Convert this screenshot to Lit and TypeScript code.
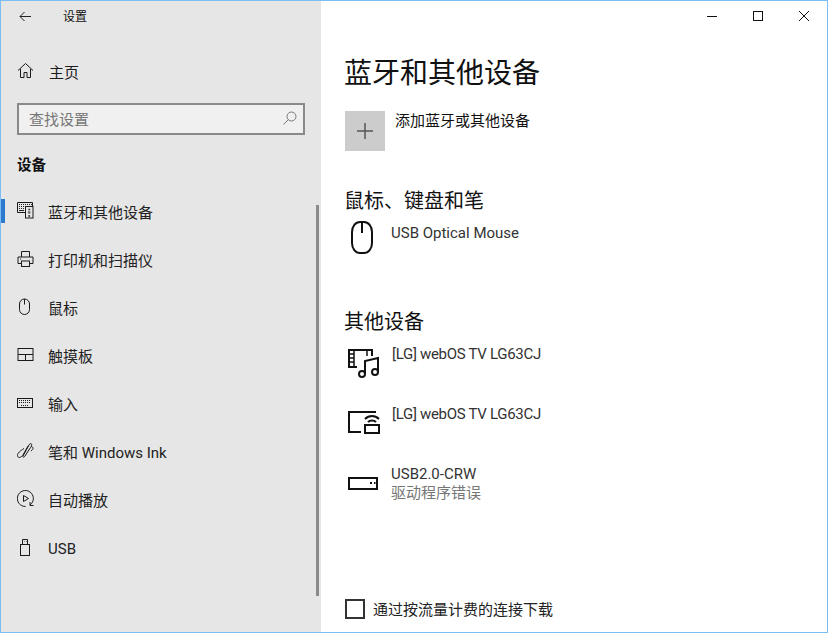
import { LitElement, html, css, svg } from "lit";
import { customElement } from "lit/decorators.js";

const s16 = (body: unknown) => html`<svg class="ni" width="18" height="18" viewBox="0 0 18 18" fill="none" stroke="#1a1a1a" stroke-width="1">${body}</svg>`;

const navIcons = [
  svg`<path d="M.5 .5H15.5V9.5H8.5V10.5H.5Z" fill="none"/><path d="M2 2.5h1M4 2.5h1M6 2.5h1M8 2.5h1M10 2.5h1M12 2.5h1M14 2.5h1M2 4.5h1M4 4.5h1M6 4.5h1M2 6.5h1M4 6.5h1M6 6.5h1M2 8.5h5" stroke="#222"/><rect x="8.5" y="4.5" width="7.5" height="11.5" fill="#e6e6e6"/><circle cx="12.2" cy="7.5" r="1.1" fill="#555" stroke="none"/><circle cx="12.2" cy="10.5" r="1.4" fill="#777" stroke="none"/><circle cx="12.2" cy="14" r="1" fill="#333" stroke="none"/>`,
  svg`<path d="M4.5 7V1.5H12.5V7"/><path d="M4.5 13.5H1V7H16V13.5H12.5"/><rect x="4.5" y="11" width="8" height="5.5"/><path d="M3 9h1"/>`,
  svg`<rect x="2.5" y="1" width="10" height="15.5" rx="5" ry="5"/><path d="M7.5 1V6.5"/>`,
  svg`<rect x="1" y="2.5" width="15" height="12"/><path d="M1 8.5H16M8.5 8.5V14.5"/>`,
  svg`<rect x=".5" y="4.5" width="15" height="9"/><path d="M2 6.5h12M2 8.5h12M4 11.5h8" stroke-dasharray="1 1"/>`,
  svg`<path d="M6 14L12 3C12.8 1.5 14 1 14.5 2S14.5 4 13.5 5.5L8 14C7 15.5 6 15.5 5.8 14.5S6 13 6.5 12L11 4"/><path d="M7 6.5C3 9 .5 11 .5 13.5S3 16 5 14"/><path d="M14 4.5C16.5 5 17 7 14 9"/>`,
  svg`<path d="M13 15A8 8 0 1 0 8.5 16.5" /><path d="M13 12V15.5H16.5"/><path d="M6.5 5.5L11.5 8.5L6.5 11.5Z"/>`,
  svg`<rect x="3.5" y="6.5" width="9" height="11"/><path d="M5.5 6.5V1.5H10.5V6.5"/><path d="M7 3.5h.5M9 3.5h.5"/>`,
];

const navItems = ["蓝牙和其他设备", "打印机和扫描仪", "鼠标", "触摸板", "输入", "笔和 Windows Ink", "自动播放", "USB"];

@customElement("app-root")
export class AppRoot extends LitElement {
  static styles = css`
    :host {
      display: block;
      width: 828px;
      height: 633px;
      box-sizing: border-box;
      border: 1px solid #7dbcf6;
      background: #fff;
      font-family: Roboto, "Noto Sans CJK SC", sans-serif;
      font-size: 15px;
      color: #1a1a1a;
      overflow: hidden;
    }
    svg { display: block; flex: none; }
    .win { display: flex; height: 100%; }

    .side {
      position: relative;
      flex: none;
      width: 320px;
      background: #e6e6e6;
      display: flex;
      flex-direction: column;
    }
    .head { height: 30px; display: flex; align-items: center; padding-left: 16px; }
    .head .title { margin-left: 30px; font-size: 12px; line-height: 30px; padding-top: 2px; color: #111; }
    .home { margin-top: 22px; height: 36px; display: flex; align-items: center; padding-left: 16px; }
    .home span { margin-left: 14px; }
    .search {
      margin: 14px 0 0 16px;
      width: 288px;
      height: 32px;
      box-sizing: border-box;
      border: 2px solid #8a8a8a;
      background: #f0f0f0;
      display: flex;
      align-items: center;
      justify-content: space-between;
      padding: 0 5px 2px 10px;
      color: #767676;
    }
    .sec { margin: 17px 0 0 16px; height: 28px; line-height: 28px; font-weight: 700; font-size: 14.5px; color: #111; }
    .nav { margin-top: 7px; display: flex; flex-direction: column; }
    .item { height: 48px; display: flex; align-items: center; padding-left: 16px; position: relative; color: #222; }
    .item .ni { margin-right: 13px; }
    .item.last span { padding-top: 3px; }
    .item.on::before {
      content: "";
      position: absolute;
      left: 0; top: 12px;
      width: 4px; height: 24px;
      background: #2b7ad0;
    }
    .thumb { position: absolute; left: 315px; top: 204px; width: 3px; height: 391px; background: #8a8a8a; }

    .main { flex: 1; display: flex; flex-direction: column; padding-left: 24px; position: relative; }
    .ctl { height: 30px; display: flex; justify-content: flex-end; align-items: center; }
    .ctl div { width: 46px; display: flex; justify-content: center; }
    h1 { margin: 23px 0 0 -1px; font-size: 28px; font-weight: 400; line-height: 40px; color: #111; }
    .add { margin-top: 17px; display: flex; color: #111; height: 40px; }
    .tile { width: 40px; height: 40px; background: #ccc; display: flex; align-items: center; justify-content: center; flex: none; }
    .add span { margin-left: 10px; line-height: 20px; }
    h2 { margin: 36px 0 0 -1px; font-size: 20px; font-weight: 400; line-height: 28px; color: #111; }
    h2.two { margin-top: 53px; }
    .dev { display: flex; height: 60px; }
    .dev .ic { width: 46px; flex: none; }
    .dev .tx { line-height: 20px; padding-top: 8px; color: #333; }
    .dev .lg { margin-left: 1px; letter-spacing: -0.3px; }
    .dev .er { color: #767676; margin-top: -1px; }
    .mouse { height: 40px; }
    .mouse .ic svg { margin: 6px 0 0 6px; }
    .film svg { margin: 12px 0 0 1px; }
    .cast svg { margin: 14px 0 0 1px; }
    .drive svg { margin: 17px 0 0 1px; }
    .foot { margin-top: auto; padding-bottom: 13px; display: flex; align-items: center; color: #222; }
    .box { width: 20px; height: 20px; box-sizing: border-box; border: 2px solid #333; margin-right: 8px; }
  `;

  render() {
    return html`<div class="win">
      <div class="side">
        <div class="head">
          <svg width="16" height="16" viewBox="0 0 16 16" fill="none" stroke="#222"><path d="M14 8.5H3M7.5 4L3 8.5L7.5 13"/></svg>
          <span class="title">设置</span>
        </div>
        <div class="home">
          ${s16(svg`<path d="M1 8.5L8.5 1.5L16 8.5M3.5 7V15.5H7V10.5H10V15.5H13.5V7"/>`)}
          <span>主页</span>
        </div>
        <div class="search">
          <span>查找设置</span>
          <svg width="16" height="16" viewBox="0 0 16 16" fill="none" stroke="#777"><circle cx="9.5" cy="6.5" r="4.5"/><path d="M6.2 9.8L1.5 14.5"/></svg>
        </div>
        <div class="sec">设备</div>
        <div class="nav">
          ${navItems.map((t, i) => html`<div class="item ${i === 0 ? "on" : ""} ${i === 7 ? "last" : ""}">${s16(navIcons[i])}<span>${t}</span></div>`)}
        </div>
        <div class="thumb"></div>
      </div>
      <div class="main">
        <div class="ctl">
          <div><svg width="12" height="12" viewBox="0 0 12 12" stroke="#111"><path d="M1 6.5H11"/></svg></div>
          <div><svg width="12" height="12" viewBox="0 0 12 12" fill="none" stroke="#111"><rect x="1.5" y="1.5" width="9" height="9"/></svg></div>
          <div><svg width="12" height="12" viewBox="0 0 12 12" fill="none" stroke="#111"><path d="M1 1L11 11M11 1L1 11"/></svg></div>
        </div>
        <h1>蓝牙和其他设备</h1>
        <div class="add">
          <div class="tile"><svg width="16" height="16" viewBox="0 0 16 16" stroke="#555" stroke-width="1.5"><path d="M8 0V16M0 8H16"/></svg></div>
          <span>添加蓝牙或其他设备</span>
        </div>
        <h2>鼠标、键盘和笔</h2>
        <div class="dev mouse">
          <div class="ic"><svg width="22" height="33" viewBox="0 0 22 33" fill="none" stroke="#111" stroke-width="2"><rect x="1" y="1" width="20" height="31" rx="8" ry="10"/><path d="M11 1V12"/></svg></div>
          <div class="tx">USB Optical Mouse</div>
        </div>
        <h2 class="two">其他设备</h2>
        <div class="dev">
          <div class="ic film"><svg width="34" height="32" viewBox="0 0 34 32" fill="none" stroke="#111" stroke-width="2">
            <path d="M11 19H3V2H26V8"/><path d="M8 2V19M21 2V8" stroke-width="1.5"/><path d="M3 6h5M3 10h5M3 14h5" stroke-width="1.5"/>
            <circle cx="16" cy="26" r="3"/><circle cx="29" cy="24" r="3"/><path d="M19 26V13L32 10V24"/>
          </svg></div>
          <div class="tx lg">[LG] webOS TV LG63CJ</div>
        </div>
        <div class="dev">
          <div class="ic cast"><svg width="34" height="28" viewBox="0 0 34 28" fill="none" stroke="#111" stroke-width="2">
            <path d="M30 2H3V22H12"/><path d="M12 22H15"/><rect x="19" y="15" width="14" height="8"/>
            <path d="M19 9C23 5 29 5 33 9M22 12C24 10 28 10 30 12"/>
          </svg></div>
          <div class="tx lg">[LG] webOS TV LG63CJ</div>
        </div>
        <div class="dev">
          <div class="ic drive"><svg width="32" height="18" viewBox="0 0 32 18" fill="none" stroke="#111" stroke-width="2">
            <rect x="3" y="5" width="28" height="11"/><path d="M24 10h2M28 10h1.5"/>
          </svg></div>
          <div class="tx">USB2.0-CRW<div class="er">驱动程序错误</div></div>
        </div>
        <div class="foot"><div class="box"></div><span>通过按流量计费的连接下载</span></div>
      </div>
    </div>`;
  }
}
